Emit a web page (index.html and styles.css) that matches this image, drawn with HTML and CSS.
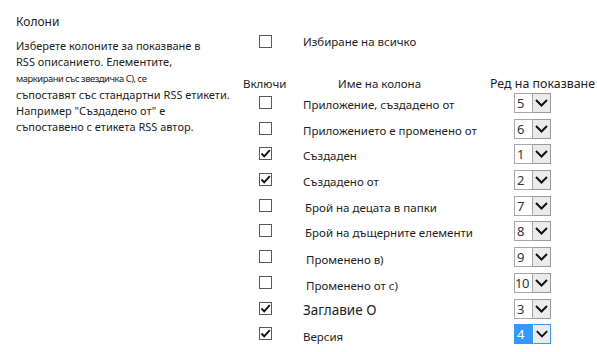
FILE: index.html
```html
<!DOCTYPE html>
<html lang="bg">
<head>
<meta charset="utf-8">
<link rel="stylesheet" href="styles.css">
</head>
<body>
<div class="page">
  <div class="side">
    <div class="title">Колони</div>
    <div class="desc">
      <div class="line">Изберете колоните за показване в</div>
      <div class="line">RSS описанието. Елементите,</div>
      <div class="line small">маркирани със звездичка С), се</div>
      <div class="line">съпоставят със стандартни RSS етикети.</div>
      <div class="line">Например "Създадено от" е</div>
      <div class="line">съпоставено с етикета RSS автор.</div>
    </div>
  </div>
  <div class="main">
    <div class="selectall">
      <span class="cb"></span>
      <span class="sa-label">Избиране на всичко</span>
    </div>
    <div class="grid">
      <div class="h h1">Включи</div>
      <div class="h h2">Име на колона</div>
      <div class="h h3">Ред на показване</div>

      <div class="c1"><span class="cb"></span></div>
      <div class="c2">Приложение, създадено от</div>
      <div class="c3"><span class="sel"><span class="val">5</span><span class="btn"><svg viewBox="0 0 17 18" width="17" height="18"><polyline points="3,6 8.5,11.5 14,6" fill="none" stroke="#111" stroke-width="2"/></svg></span></span></div>

      <div class="c1"><span class="cb"></span></div>
      <div class="c2">Приложението е променено от</div>
      <div class="c3"><span class="sel"><span class="val">6</span><span class="btn"><svg viewBox="0 0 17 18" width="17" height="18"><polyline points="3,6 8.5,11.5 14,6" fill="none" stroke="#111" stroke-width="2"/></svg></span></span></div>

      <div class="c1"><span class="cb on"><svg viewBox="0 0 11 11" width="11" height="11"><polyline points="1.5,5.5 4.2,8.3 9.8,2.2" fill="none" stroke="#111" stroke-width="1.9"/></svg></span></div>
      <div class="c2">Създаден</div>
      <div class="c3"><span class="sel"><span class="val">1</span><span class="btn"><svg viewBox="0 0 17 18" width="17" height="18"><polyline points="3,6 8.5,11.5 14,6" fill="none" stroke="#111" stroke-width="2"/></svg></span></span></div>

      <div class="c1"><span class="cb on"><svg viewBox="0 0 11 11" width="11" height="11"><polyline points="1.5,5.5 4.2,8.3 9.8,2.2" fill="none" stroke="#111" stroke-width="1.9"/></svg></span></div>
      <div class="c2">Създадено от</div>
      <div class="c3"><span class="sel"><span class="val">2</span><span class="btn"><svg viewBox="0 0 17 18" width="17" height="18"><polyline points="3,6 8.5,11.5 14,6" fill="none" stroke="#111" stroke-width="2"/></svg></span></span></div>

      <div class="c1"><span class="cb"></span></div>
      <div class="c2 shift">Брой на децата в папки</div>
      <div class="c3"><span class="sel"><span class="val">7</span><span class="btn"><svg viewBox="0 0 17 18" width="17" height="18"><polyline points="3,6 8.5,11.5 14,6" fill="none" stroke="#111" stroke-width="2"/></svg></span></span></div>

      <div class="c1"><span class="cb"></span></div>
      <div class="c2 shift">Брой на дъщерните елементи</div>
      <div class="c3"><span class="sel"><span class="val">8</span><span class="btn"><svg viewBox="0 0 17 18" width="17" height="18"><polyline points="3,6 8.5,11.5 14,6" fill="none" stroke="#111" stroke-width="2"/></svg></span></span></div>

      <div class="c1"><span class="cb"></span></div>
      <div class="c2 shift narrow">Променено в)</div>
      <div class="c3"><span class="sel"><span class="val">9</span><span class="btn"><svg viewBox="0 0 17 18" width="17" height="18"><polyline points="3,6 8.5,11.5 14,6" fill="none" stroke="#111" stroke-width="2"/></svg></span></span></div>

      <div class="c1"><span class="cb"></span></div>
      <div class="c2 shift narrow">Променено от с)</div>
      <div class="c3"><span class="sel"><span class="val ten">10</span><span class="btn"><svg viewBox="0 0 17 18" width="17" height="18"><polyline points="3,6 8.5,11.5 14,6" fill="none" stroke="#111" stroke-width="2"/></svg></span></span></div>

      <div class="c1"><span class="cb on"><svg viewBox="0 0 11 11" width="11" height="11"><polyline points="1.5,5.5 4.2,8.3 9.8,2.2" fill="none" stroke="#111" stroke-width="1.9"/></svg></span></div>
      <div class="c2 big">Заглавие О</div>
      <div class="c3"><span class="sel"><span class="val">3</span><span class="btn"><svg viewBox="0 0 17 18" width="17" height="18"><polyline points="3,6 8.5,11.5 14,6" fill="none" stroke="#111" stroke-width="2"/></svg></span></span></div>

      <div class="c1"><span class="cb on"><svg viewBox="0 0 11 11" width="11" height="11"><polyline points="1.5,5.5 4.2,8.3 9.8,2.2" fill="none" stroke="#111" stroke-width="1.9"/></svg></span></div>
      <div class="c2 last">Версия</div>
      <div class="c3"><span class="sel active"><span class="val">4</span><span class="btn"><svg viewBox="0 0 17 18" width="17" height="18"><polyline points="3,6 8.5,11.5 14,6" fill="none" stroke="#111" stroke-width="2"/></svg></span></span></div>
    </div>
  </div>
</div>
</body>
</html>
```
FILE: styles.css
```css
html, body {
  margin: 0;
  padding: 0;
  background: #fff;
}
body {
  font-family: "Noto Sans", "Open Sans", sans-serif;
  color: #1e1e1e;
  font-size: 11px;
}
.page {
  display: flex;
  width: 597px;
  height: 352px;
}
.side {
  width: 227px;
  padding-left: 16px;
  padding-top: 13px;
  box-sizing: border-box;
}
.title {
  font-size: 12px;
  line-height: 17px;
}
.desc {
  margin-top: 8px;
}
.line {
  font-size: 11px;
  line-height: 16.3px;
  white-space: nowrap;
}
.line.small {
  font-size: 9.4px;
  letter-spacing: -0.45px;
}
.main {
  padding-left: 16px;
  padding-top: 35px;
  flex: 1;
}
.selectall {
  display: flex;
  align-items: flex-start;
  height: 41px;
  padding-left: 16px;
}
.sa-label {
  margin-left: 31px;
  font-size: 11.5px;
  line-height: 14px;
  margin-top: 0;
}
.cb {
  display: inline-flex;
  align-items: center;
  justify-content: center;
  width: 13px;
  height: 13px;
  border: 1px solid #5a5a5a;
  box-sizing: border-box;
  background: #fff;
}
.grid {
  display: grid;
  grid-template-columns: 60px 187px 1fr;
  grid-template-rows: 17px;
  grid-auto-rows: 25.7px;
}
.h {
  font-size: 11.5px;
  line-height: 16px;
  white-space: nowrap;
}
.h2 {
  padding-left: 35px;
}
.h3 {
  font-size: 12.4px;
}
.c1 {
  padding-left: 16px;
  padding-top: 3px;
}
.c2 {
  font-size: 11.5px;
  line-height: 16px;
  padding-top: 4px;
  white-space: nowrap;
}
.c2.shift {
  padding-left: 2px;
}
.c2.narrow {
  padding-left: 3px;
  padding-top: 5px;
}
.c2.big {
  font-size: 13.5px;
  padding-top: 3px;
}
.c2.last {
  padding-top: 5px;
}
.c3 {
  padding-left: 24px;
}
.sel {
  display: inline-flex;
  height: 20px;
}
.val {
  width: 19px;
  height: 20px;
  border: 1px solid #a8a8a8;
  box-sizing: border-box;
  font-size: 13px;
  line-height: 18px;
  padding-left: 2px;
  color: #333;
  background: #fff;
}
.val.ten {
  padding-left: 0;
  letter-spacing: -0.5px;
}
.btn {
  width: 18px;
  height: 20px;
  border: 1px solid #9a9a9a;
  border-left: none;
  box-sizing: border-box;
  background: #ebebeb;
  display: flex;
  align-items: center;
  justify-content: center;
}
.btn svg {
  display: block;
}
.sel.active .val {
  border-color: #3399ff;
  background: #3399ff;
  color: #fff;
}
.sel.active .btn {
  border-color: #3399ff;
  border-left: 1px solid #fff;
}
```
